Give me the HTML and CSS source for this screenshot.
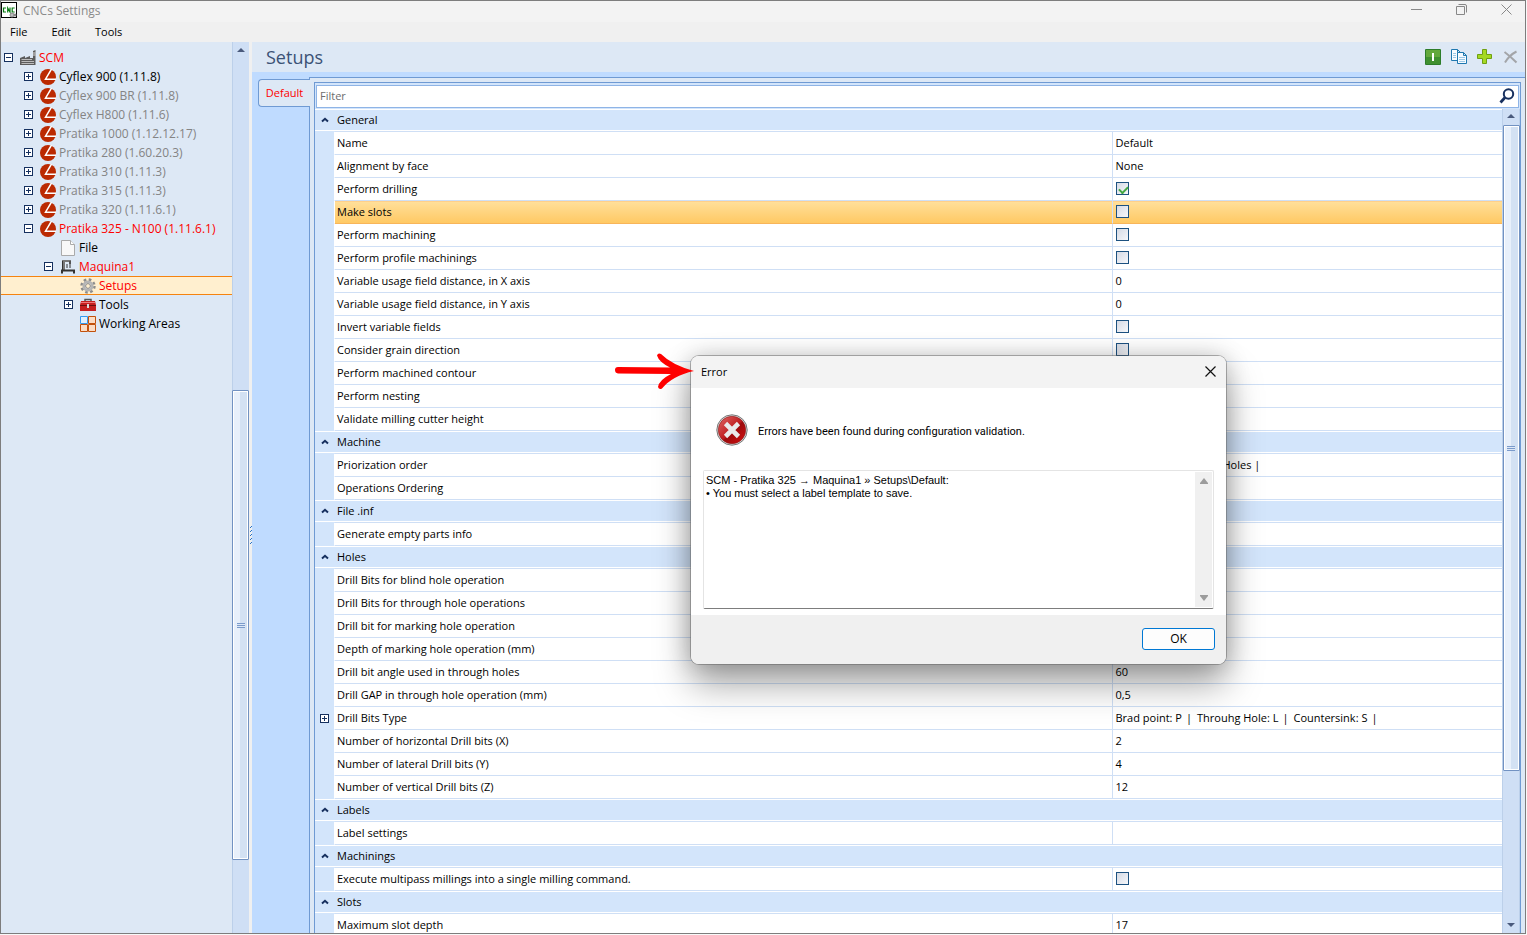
FILE: index.html
```html
<!DOCTYPE html>
<html lang="en">
<head>
<meta charset="utf-8">
<title>CNCs Settings</title>
<link rel="stylesheet" href="styles.css">
</head>
<body>
<svg class="defs" aria-hidden="true">
  <symbol id="plus" viewBox="0 0 9 9"><rect x=".5" y=".5" width="8" height="8" fill="#fff" stroke="#15305f"/><path d="M2 4.500H7M4.500 2V7" stroke="#15305f"/></symbol>
  <symbol id="minus" viewBox="0 0 9 9"><rect x=".5" y=".5" width="8" height="8" fill="#fff" stroke="#15305f"/><path d="M2 4.500H7" stroke="#15305f"/></symbol>
  <symbol id="scm" viewBox="0 0 16 16"><circle cx="8" cy="8" r="8" fill="#bb2a02"/><path d="M11.500 0L5.500 10.200H16" fill="none" stroke="#fff" stroke-width="1.500"/></symbol>
  <symbol id="chev" viewBox="0 0 8 6"><path d="M1 4.500L4 1.800L7 4.500" fill="none" stroke="#17305f" stroke-width="2"/></symbol>
  <symbol id="up" viewBox="0 0 8 4"><path d="M0 4L4 0L8 4Z" fill="#4a5a7c"/></symbol>
  <symbol id="down" viewBox="0 0 8 4"><path d="M0 0L4 4L8 0Z" fill="#4a5a7c"/></symbol>
</svg>
<div class="window">
  <header class="titlebar">
    <svg class="app-icon" viewBox="0 0 16 16"><rect x=".5" y=".5" width="15" height="15" fill="#fff" stroke="#000"/><path d="M5 6H2.500V10H5M6.700 10.500V6L9 10V5.500M13.700 6H11.200V10H13.700" fill="none" stroke="#087a12" stroke-width="1.200"/><circle cx="11" cy="13" r="2" fill="#bbb" stroke="#888"/><circle cx="14" cy="13" r="1.500" fill="#888"/></svg>
    <h1 class="window-title">CNCs Settings</h1>
    <div class="window-buttons">
      <button aria-label="Minimize"><svg width="11" height="11"><path d="M0 5.500H11" stroke="#888"/></svg></button>
      <button aria-label="Restore"><svg width="11" height="11"><path d="M.5 2.500H8.500V10.500H.5ZM2.500 .5H9Q10.500 .5 10.500 2V8.500" fill="none" stroke="#888"/></svg></button>
      <button aria-label="Close"><svg width="11" height="11"><path d="M.5 .5L10.500 10.500M10.500 .5L.5 10.500" stroke="#888"/></svg></button>
    </div>
  </header>
  <nav class="menubar"><button>File</button><button>Edit</button><button>Tools</button></nav>
  <div class="body">
    <aside class="sidebar">
      <ul class="tree">
        <li class="l0 red"><svg class="tg"><use href="#minus"/></svg><svg class="ic" viewBox="0 0 16 16"><path d="M0 15V8L5 6V8L10 6V8H13V1L15.500 0V15Z" fill="#5c5c5c"/><path d="M1.500 9.500H12M1.500 11.500H14M1.500 13.500H14" stroke="#bbb"/><path d="M13 3H15.500M13 5H15.500" stroke="#ddd"/></svg>SCM</li>
        <li class="l1"><svg class="tg"><use href="#plus"/></svg><svg class="ic"><use href="#scm"/></svg>Cyflex 900 (1.11.8)</li>
        <li class="l1 off"><svg class="tg"><use href="#plus"/></svg><svg class="ic"><use href="#scm"/></svg>Cyflex 900 BR (1.11.8)</li>
        <li class="l1 off"><svg class="tg"><use href="#plus"/></svg><svg class="ic"><use href="#scm"/></svg>Cyflex H800 (1.11.6)</li>
        <li class="l1 off"><svg class="tg"><use href="#plus"/></svg><svg class="ic"><use href="#scm"/></svg>Pratika 1000 (1.12.12.17)</li>
        <li class="l1 off"><svg class="tg"><use href="#plus"/></svg><svg class="ic"><use href="#scm"/></svg>Pratika 280 (1.60.20.3)</li>
        <li class="l1 off"><svg class="tg"><use href="#plus"/></svg><svg class="ic"><use href="#scm"/></svg>Pratika 310 (1.11.3)</li>
        <li class="l1 off"><svg class="tg"><use href="#plus"/></svg><svg class="ic"><use href="#scm"/></svg>Pratika 315 (1.11.3)</li>
        <li class="l1 off"><svg class="tg"><use href="#plus"/></svg><svg class="ic"><use href="#scm"/></svg>Pratika 320 (1.11.6.1)</li>
        <li class="l1 red"><svg class="tg"><use href="#minus"/></svg><svg class="ic"><use href="#scm"/></svg>Pratika 325 - N100 (1.11.6.1)</li>
        <li class="l2"><span class="tg"></span><svg class="ic" viewBox="0 0 16 16"><path d="M1.500 .5H10.500L14.500 4.500V15.500H1.500Z" fill="#f8f8f8" stroke="#aaa"/><path d="M10.500 .5V4.500H14.500" fill="#fff" stroke="#aaa"/></svg>File</li>
        <li class="l2 red"><svg class="tg"><use href="#minus"/></svg><svg class="ic" viewBox="0 0 16 16"><path d="M2 1H11V5H9V3H5V11H2Z" fill="#777"/><path d="M10 2V9M7 5V9M2.500 2V11" stroke="#333"/><path d="M1 10.500H15V14.500H13V12.500H3V14.500H1Z" fill="#333"/></svg>Maquina1</li>
        <li class="l3 red selected"><span class="tg"></span><svg class="ic" viewBox="0 0 16 16"><circle cx="8" cy="8" r="6.500" fill="none" stroke="#8c8c8c" stroke-width="2.400" stroke-dasharray="2.600 2.500"/><circle cx="8" cy="8" r="4.300" fill="#e8e8e8" stroke="#b4b4b4" stroke-width="2.500"/><circle cx="8" cy="8" r="2.400" fill="#ffefcf" stroke="#888"/></svg>Setups</li>
        <li class="l3"><svg class="tg"><use href="#plus"/></svg><svg class="ic" viewBox="0 0 16 16"><path d="M5 5V2.500H11V5" fill="none" stroke="#555" stroke-width="1.500"/><path d="M1 4H15L16 8V14H0V8Z" fill="#c62020"/><path d="M0 8.500H16" stroke="#6e1010"/><path d="M1 5.500H15" stroke="#ee7777"/><rect x="7" y="7" width="2" height="4" fill="#ddd"/></svg>Tools</li>
        <li class="l3"><span class="tg"></span><svg class="ic" viewBox="0 0 16 16"><path d="M.5 .5H7.500V7.500H.5Z" fill="#dff0ff" stroke="#3399ee"/><path d="M8.500 .5H15.500V7.500H8.500ZM.5 8.500H7.500V15.500H.5ZM8.500 8.500H15.500V15.500H8.500Z" fill="#fbdcc4" stroke="#c2510c"/></svg>Working Areas</li>
      </ul>
      <div class="scroll side-scroll">
        <svg class="arrow"><use href="#up"/></svg>
        <div class="thumb"><span class="grip"></span></div>
      </div>
    </aside>
    <div class="splitter"><svg width="3" height="20"><path d="M1 1.500H2M1 5.500H2M1 9.500H2M1 13.500H2M1 17.500H2M2 .5H3M2 4.500H3M2 8.500H3M2 12.500H3M2 16.500H3" stroke="#2874c8"/></svg></div>
    <main class="main">
      <div class="head">
        <h2>Setups</h2>
        <div class="actions">
          <button aria-label="Enable"><svg width="16" height="16"><rect width="16" height="16" rx="1" fill="#2d7d2a"/><rect x="1" y="1" width="14" height="7" fill="#62a83c"/><rect x="1" y="8" width="14" height="7" fill="#3f9030"/><rect x="7" y="4" width="2" height="8" fill="#fff"/></svg></button>
          <button aria-label="Copy"><svg width="16" height="16" fill="#f6fbff" stroke="#1f78b0"><path d="M.5 .5H6.500L9.500 3.500V11.500H.5ZM6.500 .5V3.500H9.500"/><path d="M6.500 3.500H12.500L15.500 6.500V14.500H6.500ZM12.500 3.500V6.500H15.500"/><path d="M2 4.500H5M2 6.500H5M2 8.500H5M8 8.500H14M8 10.500H14M8 12.500H14" stroke="#9cc8e6"/></svg></button>
          <button aria-label="Add"><svg width="16" height="16"><path d="M5.500 .5H9.500V5.500H14.500V9.500H9.500V14.500H5.500V9.500H.5V5.500H5.500Z" fill="#a5d922" stroke="#6fa012"/></svg></button>
          <button aria-label="Delete"><svg width="16" height="16"><path d="M1.500 3Q7 7 13.500 13.500M13.500 2.500Q6.500 6 2 13.500" fill="none" stroke="#a3a5a8" stroke-width="2"/></svg></button>
        </div>
      </div>
      <div class="content">
        <button class="tab">Default</button>
        <section class="panel"><div class="inner">
          <label class="filter"><input type="text" placeholder="Filter" aria-label="Filter"><svg width="16" height="16"><circle cx="9.500" cy="6" r="4.700" fill="#fff" stroke="#17305f" stroke-width="2"/><path d="M6 9.500L1.500 14.500" stroke="#17305f" stroke-width="2.800"/></svg></label>
          <div class="gridwrap">
            <table class="grid">
              <colgroup><col class="c0"><col class="c1"><col></colgroup>
              <tr class="group"><th><svg><use href="#chev"/></svg></th><th colspan="2">General</th></tr>
              <tr><td></td><td>Name</td><td>Default</td></tr>
              <tr><td></td><td>Alignment by face</td><td>None</td></tr>
              <tr><td></td><td>Perform drilling</td><td><input type="checkbox" aria-label="Perform drilling" checked></td></tr>
              <tr class="current"><td></td><td>Make slots</td><td><input type="checkbox" aria-label="Make slots"></td></tr>
              <tr><td></td><td>Perform machining</td><td><input type="checkbox" aria-label="Perform machining"></td></tr>
              <tr><td></td><td>Perform profile machinings</td><td><input type="checkbox" aria-label="Perform profile machinings"></td></tr>
              <tr><td></td><td>Variable usage field distance, in X axis</td><td>0</td></tr>
              <tr><td></td><td>Variable usage field distance, in Y axis</td><td>0</td></tr>
              <tr><td></td><td>Invert variable fields</td><td><input type="checkbox" aria-label="Invert variable fields"></td></tr>
              <tr><td></td><td>Consider grain direction</td><td><input type="checkbox" aria-label="Consider grain direction"></td></tr>
              <tr><td></td><td>Perform machined contour</td><td></td></tr>
              <tr><td></td><td>Perform nesting</td><td></td></tr>
              <tr><td></td><td>Validate milling cutter height</td><td></td></tr>
              <tr class="group"><th><svg><use href="#chev"/></svg></th><th colspan="2">Machine</th></tr>
              <tr><td></td><td>Priorization order</td><td class="order">Holes |</td></tr>
              <tr><td></td><td>Operations Ordering</td><td></td></tr>
              <tr class="group"><th><svg><use href="#chev"/></svg></th><th colspan="2">File .inf</th></tr>
              <tr><td></td><td>Generate empty parts info</td><td></td></tr>
              <tr class="group"><th><svg><use href="#chev"/></svg></th><th colspan="2">Holes</th></tr>
              <tr><td></td><td>Drill Bits for blind hole operation</td><td></td></tr>
              <tr><td></td><td>Drill Bits for through hole operations</td><td></td></tr>
              <tr><td></td><td>Drill bit for marking hole operation</td><td></td></tr>
              <tr><td></td><td>Depth of marking hole operation (mm)</td><td></td></tr>
              <tr><td></td><td>Drill bit angle used in through holes</td><td>60</td></tr>
              <tr><td></td><td>Drill GAP in through hole operation (mm)</td><td>0,5</td></tr>
              <tr><td><svg class="tg"><use href="#plus"/></svg></td><td>Drill Bits Type</td><td class="types"><span>Brad point: P</span><span>|</span><span>Throuhg Hole: L</span><span>|</span><span>Countersink: S</span><span>|</span></td></tr>
              <tr><td></td><td>Number of horizontal Drill bits (X)</td><td>2</td></tr>
              <tr><td></td><td>Number of lateral Drill bits (Y)</td><td>4</td></tr>
              <tr><td></td><td>Number of vertical Drill bits (Z)</td><td>12</td></tr>
              <tr class="group"><th><svg><use href="#chev"/></svg></th><th colspan="2">Labels</th></tr>
              <tr><td></td><td>Label settings</td><td></td></tr>
              <tr class="group"><th><svg><use href="#chev"/></svg></th><th colspan="2">Machinings</th></tr>
              <tr><td></td><td>Execute multipass millings into a single milling command.</td><td><input type="checkbox" aria-label="Execute multipass millings"></td></tr>
              <tr class="group"><th><svg><use href="#chev"/></svg></th><th colspan="2">Slots</th></tr>
              <tr><td></td><td>Maximum slot depth</td><td>17</td></tr>
            </table>
            <div class="scroll grid-scroll">
              <svg class="arrow"><use href="#up"/></svg>
              <div class="thumb"><span class="grip"></span></div>
              <svg class="arrow end"><use href="#down"/></svg>
            </div>
          </div>
        </div></section>
      </div>
    </main>
  </div>
</div>
<div class="dialog" role="dialog" aria-labelledby="dialog-title">
  <div class="dialog-title"><h3 id="dialog-title">Error</h3><button aria-label="Close dialog"><svg width="11" height="11"><path d="M.5 .5L10.500 10.500M10.500 .5L.5 10.500" stroke="#111" stroke-width="1.200"/></svg></button></div>
  <div class="dialog-body">
    <div class="message">
      <svg width="32" height="32" viewBox="0 0 32 32"><defs><linearGradient id="ball" x1="0" y1="0" x2="1" y2="1"><stop offset="0" stop-color="#e06a68"/><stop offset=".5" stop-color="#bf1d1f"/><stop offset=".55" stop-color="#9c0a0c"/><stop offset="1" stop-color="#d81010"/></linearGradient></defs><circle cx="16" cy="16" r="15.200" fill="#ddd" stroke="#777"/><circle cx="16" cy="16" r="13.700" fill="url(#ball)" stroke="#8c1a1a" stroke-width=".6"/><path d="M9.500 9.500L22.500 22.500M22.500 9.500L9.500 22.500" stroke="#eaeaea" stroke-width="4.600"/></svg>
      <p>Errors have been found during configuration validation.</p>
    </div>
    <div class="details">
      <textarea readonly aria-label="Details">SCM - Pratika 325 → Maquina1 » Setups\Default:
• You must select a label template to save.</textarea>
      <div class="bar"><svg width="8" height="6"><path d="M4 0L8 5V6H0V5Z" fill="#9c9c9c"/></svg><svg width="8" height="6"><path d="M4 6L8 1V0H0V1Z" fill="#9c9c9c"/></svg></div>
    </div>
  </div>
  <div class="dialog-foot"><button class="ok">OK</button></div>
</div>
<svg class="pointer" viewBox="0 0 80 38" aria-hidden="true"><path d="M4 14Q1 14 1 17T4 20.500L57 21Q45 27 44 34Q45 37 48 35.500Q58 23 80 18Q58 12 47 1Q44 -.5 43 2.500Q45 9 56 14.500Z" fill="#fe0000"/></svg>
</body>
</html>
```
FILE: styles.css
```css
* { box-sizing: border-box; }
body {
  margin: 0;
  height: 100vh;
  overflow: hidden;
  padding: 0 1px 1px 0;
  background: #f8f8f8;
  color: #000;
  font: 11px/16px "Open Sans", "Noto Sans", sans-serif;
}
h1, h2, h3, p { margin: 0; font-weight: 400; }
button { font: inherit; color: inherit; background: none; border: 0; padding: 0; }
svg { display: block; flex: none; }
.defs { position: absolute; width: 0; height: 0; }

.window {
  height: 100%;
  display: flex;
  flex-direction: column;
  border: 1px solid #7d7d7d;
  background: #f0f0f0;
}
.titlebar { display: flex; align-items: center; height: 21px; background: #f3f3f3; }
.app-icon { width: 16px; height: 16px; margin-bottom: 3px; }
.window-title { flex: 1; margin-left: 6px; padding-bottom: 2px; font-size: 12px; color: #8a8a8a; }
.window-buttons { display: flex; gap: 34px; padding: 0 13px 4px 0; }
.menubar { display: flex; gap: 24px; height: 20px; padding-left: 9px; align-items: center; }
.body { flex: 1; min-height: 0; display: flex; }

.sidebar { flex: none; width: 248px; display: flex; background: #dde8f5; }
.tree { flex: 1; margin: 0; padding: 6px 0; list-style: none; font-size: 12px; }
.tree li { display: flex; align-items: center; height: 19px; white-space: nowrap; }
.tree .l0 { padding-left: 3px; }
.tree .l1 { padding-left: 23px; }
.tree .l2 { padding-left: 43px; }
.tree .l3 { padding-left: 63px; }
.tg { flex: none; width: 9px; height: 9px; }
.tree .ic { width: 16px; height: 16px; margin: 0 3px 0 7px; }
.red { color: #fe0000; }
.off { color: #848484; }
.tree .selected { background: #ffefcf; box-shadow: inset 0 1px #f5830f, inset 0 -1px #f5830f; }

.scroll { flex: none; display: flex; flex-direction: column; align-items: center; width: 17px; background: #cfdff5; border-left: 1px solid #bcd0ea; }
.arrow { width: 8px; height: 4px; margin-top: 6px; }
.thumb {
  width: 17px;
  border: 1px solid #7292c2;
  border-radius: 1px;
  box-shadow: inset 0 0 0 1px #fff;
  background: linear-gradient(90deg, #e8f0fb 45%, #d3e1f3 45%);
  display: grid;
  place-items: center;
}
.grip { width: 8px; height: 5px; background: repeating-linear-gradient(#7b9bcb 0 1px, #dde8f7 1px 2px); }
.side-scroll .thumb { margin-top: 338px; height: 470px; margin-left: -1px; }
.splitter { flex: none; width: 3px; display: flex; align-items: center; background: #f0f0f0; padding-top: 97px; }

.main { flex: 1; min-width: 0; display: flex; flex-direction: column; background: #bfdbff; }
.head { display: flex; align-items: center; justify-content: space-between; height: 30px; padding: 0 6px 0 14px; background: #dde8f5; }
.head h2 { font-size: 18px; line-height: 24px; color: #3b5275; }
.actions { display: flex; gap: 10px; }
.content { flex: 1; min-height: 0; display: flex; align-items: flex-start; padding: 5px 0 0 6px; }
.tab {
  position: relative;
  flex: none;
  width: 52px;
  height: 28px;
  margin: 2px -1px 0 0;
  border: 1px solid #6f9ad3;
  border-right: 0;
  border-radius: 4px 0 0 4px;
  background: #dde8f5;
  color: #fe0000;
}
.panel { flex: 1; min-width: 0; height: 100%; padding: 4px 4px 0; border: 1px solid #6f9ad3; border-width: 1px 0 0 1px; background: #dde8f5; }
.inner { height: 100%; overflow: hidden; border: 1px solid #6f9ad3; border-bottom: 0; background: #d3e5fb; }
.filter { display: flex; align-items: center; height: 23px; margin: 2px 1px 1px; padding: 0 3px 1px; background: #fff; border: 1px solid #8fb4e6; }
.filter input { flex: 1; border: 0; outline: 0; padding: 0; font: inherit; background: none; }
.filter input::placeholder { color: #6d6d6d; }
.gridwrap { display: flex; height: calc(100% - 26px); overflow: hidden; }
.grid { flex: 1; align-self: flex-start; table-layout: fixed; border-collapse: separate; border-spacing: 0; background: #fff; }
.c0 { width: 20px; }
.c1 { width: 65.5%; }
.grid td, .grid th { height: 23px; padding: 0 2px; border-bottom: 1px solid #cfdff5; font-weight: 400; text-align: left; white-space: nowrap; }
.grid td:first-child { padding: 0 5px; background: #d3e5fb; border-color: #d3e5fb; border-right: 1px solid #fff; }
.grid td:nth-child(3) { border-left: 1px solid #cfdff5; }
.grid th { background: #d3e5fb; box-shadow: inset 0 1px #fff, inset 0 -1px #fff; }
.grid th:first-child { padding: 0 6px; border-color: #d3e5fb; }
.grid th svg { width: 8px; height: 6px; }
.grid .current td:nth-child(n+2) { background: linear-gradient(#ffe09c, #ffc964); border-bottom-color: #f8b55a; box-shadow: inset 0 1px #ffd08a; }
.grid .order { padding-left: 109px; }
.types span { margin-right: 3px; }
.types span:nth-child(even) { margin: 0 5px 0 1px; }
.grid input {
  appearance: none;
  display: block;
  width: 13px;
  height: 13px;
  margin: 0 0 1px 1px;
  border: 1px solid #1c5180;
  background: linear-gradient(135deg, #d5dae5, #f6f7fa);
}
.grid input:checked::before {
  content: "";
  display: block;
  width: 7px;
  height: 4px;
  margin: 3px 2px;
  border: solid #43a843;
  border-width: 0 0 2px 2px;
  transform: rotate(-45deg);
}
.grid-scroll { width: 18px; border-right: 1px solid #bcd0ea; }
.grid-scroll .arrow { margin-top: 5px; }
.grid-scroll .thumb { flex: none; height: 646px; margin-top: 7px; }
.grid-scroll .end { margin-top: auto; margin-bottom: 6px; }

.dialog {
  position: absolute;
  left: 691px;
  top: 356px;
  width: 535px;
  border-radius: 8px;
  background: #fff;
  box-shadow: 0 0 0 1px rgba(100, 100, 100, .5), 0 20px 36px rgba(0, 0, 0, .36), 0 0 24px rgba(0, 0, 0, .2);
}
.dialog-title { display: flex; align-items: center; justify-content: space-between; height: 32px; padding: 0 10px 1px; border-radius: 8px 8px 0 0; background: #f3f3f3; }
.dialog-title h3 { font-size: 11px; }
.dialog-body { padding: 26px 12px 6px; }
.message { display: flex; align-items: center; gap: 10px; padding-left: 13px; font-family: Roboto, "Open Sans", sans-serif; }
.message p { padding-top: 3px; }
.details { display: flex; height: 139px; margin-top: 24px; border: 1px solid #e4e4e4; border-bottom-color: #7d7d7d; border-radius: 2px; }
.details textarea { flex: 1; border: 0; outline: 0; resize: none; overflow: hidden; padding: 3px 2px; color: #000; font: 11px/13px "Liberation Sans", Arial, sans-serif; }
.bar { width: 17px; display: flex; flex-direction: column; justify-content: space-between; align-items: center; padding: 6px 0; margin: 1px 1px 1px 0; background: #f0f0f0; }
.dialog-foot { display: flex; justify-content: flex-end; padding: 13px 11px 14px; border-radius: 0 0 8px 8px; background: #f0f0f0; }
.ok { width: 73px; height: 22px; border: 1px solid #0078d4; border-radius: 3px; background: #fdfdfd; font-size: 12px; }
.pointer { position: absolute; left: 614px; top: 353px; width: 80px; height: 38px; }
```
